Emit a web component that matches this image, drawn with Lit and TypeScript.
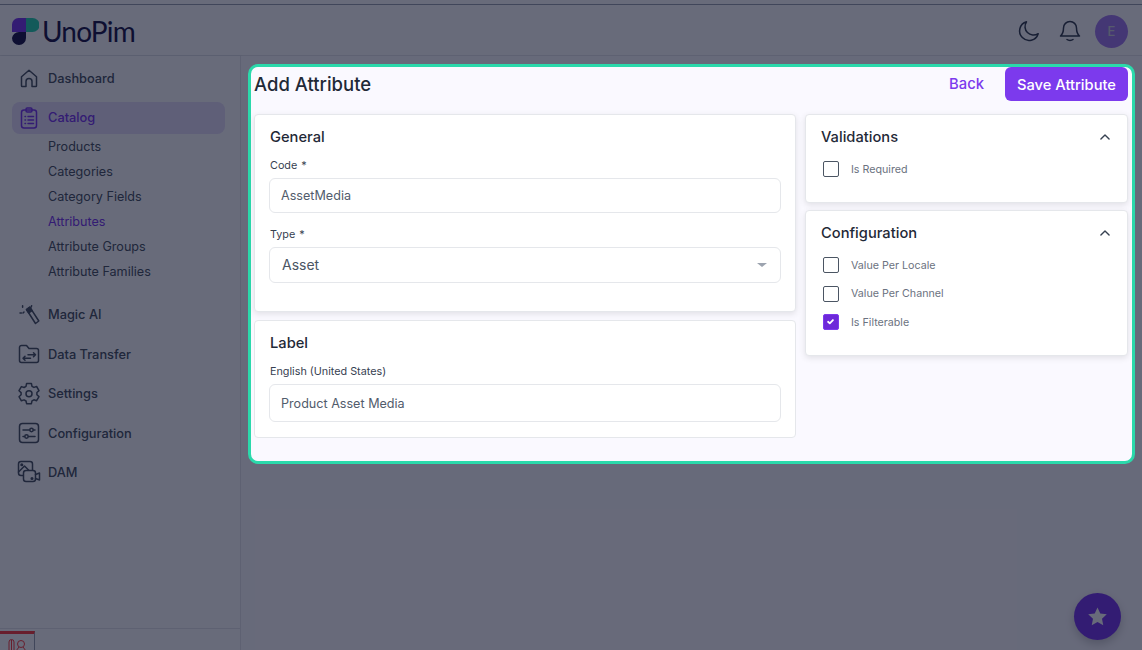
import { html, css, svg, LitElement } from "lit";
import { customElement } from "lit/decorators.js";

const icons: Record<string, unknown> = {
  home: svg`<path d="M4.500 10.700 12 4.300l7.500 6.400v9.100a.8.8 0 0 1-.8.8H15v-5a3 3 0 0 0-6 0v5H5.300a.8.8 0 0 1-.8-.8z"/>`,
  clipboard: svg`<rect x="4.500" y="4" width="15" height="18" rx="2.500"/><rect x="9" y="2" width="6" height="4" rx="1.200"/><path d="M8 10.500h.5M11 10.500h5.500M8 14h.5M11 14h5.500M8 17.500h.5M11 17.500h5.500"/>`,
  wand: svg`<path d="M9.500 7.500 12.800 5.200l9 13.800-3.300 2.500z"/><path d="M9.500 7.500 12.800 5.200 15 8.600l-3.300 2.300z" fill="currentColor"/><path d="M5.600 3.800v1.400M3 11h1.400M14.600 3.800l-.4 1.200M7 10l-1 1"/>`,
  transfer: svg`<path d="M2.500 5.500a2 2 0 0 1 2-2h5l2.500 3h7.500a2 2 0 0 1 2 2v10a2 2 0 0 1-2 2h-15a2 2 0 0 1-2-2z"/><path d="M11 12.800h7.500M16.500 10.800l2 2-2 2M13.500 16.300H6M8 14.300l-2 2 2 2"/>`,
  cog: svg`<path d="M9.600 2.500h4.800l.6 2.800 1.900 1.100 2.700-.9 2.400 4.100-2.100 1.900v2.200l2.100 1.900-2.400 4.100-2.700-.9-1.900 1.100-.6 2.800H9.600L9 20l-1.900-1.100-2.700.9L2 15.700l2.100-1.900v-2.200L2 9.700l2.400-4.100 2.700.9L9 5.300z" stroke-linejoin="round"/><circle cx="12" cy="12.700" r="3"/>`,
  sliders: svg`<rect x="2.500" y="2.500" width="19" height="19" rx="3"/><path d="M6 9h6.500M16.500 9H18M6 15.500h1.500M11.500 15.500H18"/><circle cx="14.500" cy="9" r="1.700"/><circle cx="9.500" cy="15.500" r="1.700"/>`,
  dam: svg`<rect x="1.500" y="1.500" width="14" height="14" rx="2.500"/><circle cx="4.800" cy="4.800" r=".8"/><path d="m1.500 12 6-6 5 5"/><rect x="6.500" y="10.500" width="12" height="11" rx="2.500" fill="var(--nav-fill)"/><path d="m18.500 14.500 4-1.500v7l-4-1.500"/><circle cx="15" cy="18.500" r=".8"/>`,
};

const mainNav = [
  { icon: "wand", label: "Magic AI" },
  { icon: "transfer", label: "Data Transfer" },
  { icon: "cog", label: "Settings" },
  { icon: "sliders", label: "Configuration" },
  { icon: "dam", label: "DAM" },
];

const catalogLinks = ["Products", "Categories", "Category Fields", "Attributes", "Attribute Groups", "Attribute Families"];

const chevron = html`<svg class="chevron" viewBox="0 0 24 24" fill="none" stroke="currentColor" stroke-width="2.400" stroke-linecap="round" stroke-linejoin="round"><path d="m5 15.500 7-7 7 7"/></svg>`;

@customElement("app-root")
export class AppRoot extends LitElement {
  private navIcon(name: string) {
    return html`<svg class="nav-icon" viewBox="0 0 24 24" fill="none" stroke="currentColor" stroke-width="1.500" stroke-linecap="round" stroke-linejoin="round">${icons[name]}</svg>`;
  }

  private check(label: string, checked = false) {
    return html`
      <div class="check-row">
        <span class="box ${checked ? "on" : ""}">
          ${checked ? html`<svg viewBox="0 0 16 16" fill="none" stroke="#fff" stroke-width="2.200" stroke-linecap="round" stroke-linejoin="round"><path d="m5 8.300 2.100 2L11 6.200"/></svg>` : null}
        </span>
        <span class="check-label">${label}</span>
      </div>
    `;
  }

  override render() {
    return html`
      <div class="page">
        <header class="topbar">
          <div class="brand">
            <svg class="logo" viewBox="0 0 27 27">
              <path d="M14 0H6.500A6.500 6.500 0 0 0 0 6.500V14h14z" fill="#7c3aed"/>
              <path d="M14 0h6.500a6.500 6.500 0 0 1 0 14H14z" fill="#2bd4b0"/>
              <path d="M0 20a7 7 0 0 0 14 0v-6H7a7 7 0 0 0-7 6z" fill="#1e1b4b"/>
            </svg>
            <span class="brand-name">UnoPim</span>
          </div>
          <div class="top-actions">
            <svg class="top-icon" viewBox="0 0 24 24" fill="none" stroke="currentColor" stroke-width="1.500" stroke-linecap="round" stroke-linejoin="round"><path d="M9.500 2.800a9.500 9.500 0 1 0 11.700 11.900A8.500 8.500 0 0 1 9.500 2.800z"/></svg>
            <svg class="top-icon" viewBox="0 0 24 24" fill="none" stroke="currentColor" stroke-width="1.500" stroke-linecap="round" stroke-linejoin="round"><path d="M12 2.500a6.500 6.500 0 0 0-6.500 6.500c0 4.500-1 6.300-3 8h19c-2-1.700-3-3.500-3-8A6.500 6.500 0 0 0 12 2.500z"/><path d="M9 20.500c1.500 1.300 4.500 1.300 6 0"/></svg>
            <span class="avatar">E</span>
          </div>
        </header>

        <div class="body">
          <aside class="sidebar">
            <nav>
              <a class="nav-item">${this.navIcon("home")}<span>Dashboard</span></a>
              <a class="nav-item active">${this.navIcon("clipboard")}<span>Catalog</span></a>
              <div class="sub-nav">
                ${catalogLinks.map((l) => html`<a class="sub-item ${l === "Attributes" ? "current" : ""}">${l}</a>`)}
              </div>
              <div class="rest">
                ${mainNav.map((n) => html`<a class="nav-item">${this.navIcon(n.icon)}<span>${n.label}</span></a>`)}
              </div>
            </nav>
            <div class="side-foot"></div>
          </aside>

          <main class="main">
            <section class="focus">
              <div class="title-row">
                <h1>Add Attribute</h1>
                <div class="title-actions">
                  <a class="back">Back</a>
                  <button class="save">Save Attribute</button>
                </div>
              </div>
              <div class="columns">
                <div class="col left">
                  <div class="card general">
                    <h2>General</h2>
                    <label>Code *</label>
                    <div class="input code">AssetMedia</div>
                    <label class="type-label">Type *</label>
                    <div class="input select"><span>Asset</span><i class="caret"></i></div>
                  </div>
                  <div class="card label-card">
                    <h2>Label</h2>
                    <label>English (United States)</label>
                    <div class="input tall">Product Asset Media</div>
                  </div>
                </div>
                <div class="col right">
                  <div class="card validations">
                    <div class="card-head"><h2>Validations</h2>${chevron}</div>
                    ${this.check("Is Required")}
                  </div>
                  <div class="card config">
                    <div class="card-head"><h2>Configuration</h2>${chevron}</div>
                    ${this.check("Value Per Locale")}
                    ${this.check("Value Per Channel")}
                    ${this.check("Is Filterable", true)}
                  </div>
                </div>
              </div>
            </section>
          </main>
        </div>

        <div class="overlay"></div>
        <div class="tour-tab">
          <svg viewBox="0 0 20 12" fill="none" stroke="#ff4040" stroke-width="1"><path d="M1 12V3a2.500 2.500 0 0 1 5 0v9M3.500 1v11"/><circle cx="13" cy="5" r="3.500"/><path d="m8 12 3-4M18 12l-3-4"/></svg>
        </div>
        <button class="fab">
          <svg viewBox="0 0 24 24" fill="#fff"><path d="m12 2.500 2.900 6.300 6.800.8-5 4.700 1.300 6.800-6-3.400-6 3.400 1.300-6.800-5-4.700 6.800-.8z"/></svg>
        </button>
      </div>
    `;
  }

  static styles = css`
    :host {
      display: block;
      font-family: Inter, "Liberation Sans", sans-serif;
      color: #1f2937;
      --nav-fill: #fff;
    }
    * { box-sizing: border-box; }

    .page {
      position: relative;
      width: 1142px;
      height: 650px;
      overflow: hidden;
      background: #fff;
      padding-top: 4px;
    }
    .overlay {
      position: absolute;
      inset: 0;
      background: rgba(4, 9, 34, 0.6);
      z-index: 10;
    }

    .topbar {
      height: 52px;
      border-top: 1px solid #9ca3af;
      border-bottom: 1px solid #e5e7eb;
      display: flex;
      align-items: center;
      justify-content: space-between;
      padding: 0 14px 0 12px;
    }
    .brand { display: flex; align-items: center; gap: 3px; margin-top: 2px; }
    .logo { width: 27px; height: 27px; }
    .brand-name {
      font-family: Lato, sans-serif;
      font-size: 28px;
      font-weight: 400;
      letter-spacing: -0.8px;
      color: #1e1b4b;
    }
    .top-actions { display: flex; align-items: center; gap: 17px; margin-top: 2px; }
    .top-icon { width: 24px; height: 24px; color: #374151; }
    .avatar {
      width: 33px;
      height: 33px;
      margin-left: -4px;
      border-radius: 50%;
      background: #a67ef0;
      color: #d1d5db;
      font-size: 13px;
      font-weight: 500;
      display: flex;
      align-items: center;
      justify-content: center;
    }

    .body { display: flex; height: 594px; }
    .sidebar {
      width: 241px;
      flex: none;
      display: flex;
      flex-direction: column;
      justify-content: space-between;
      background: #fff;
      border-right: 1px solid #e5e7eb;
      box-shadow: 1px 0 2px rgba(0, 0, 0, 0.08);
      padding: 6px 0 0 12px;
    }
    nav { width: 213px; }
    .nav-item {
      display: flex;
      align-items: center;
      gap: 7px;
      height: 32px;
      padding-left: 5px;
      font-size: 12.800px;
      font-weight: 500;
      color: #4b5563;
      border-radius: 8px;
      margin-bottom: 7px;
    }
    .nav-item:nth-child(odd) { margin-bottom: 8px; }
    .nav-item.active { background: #e8e0fb; color: #7c3aed; margin: 8px 0 0; padding-bottom: 1px; }
    .nav-icon { width: 24px; height: 24px; flex: none; }
    .sub-nav { display: flex; flex-direction: column; padding: 0 0 0 36px; }
    .sub-item { height: 25px; line-height: 25px; font-size: 12.600px; color: #4b5563; }
    .sub-item.current { color: #7c3aed; }
    .rest { margin-top: 14px; }
    .side-foot { height: 22px; border-top: 1px solid #e5e7eb; margin-left: -12px; }

    .main { flex: 1; background: #fdfcff; padding: 8px 7px 0 7px; }
    .focus {
      position: relative;
      z-index: 20;
      height: 400px;
      background: #faf9ff;
      border: 3px solid #2bd9ab;
      border-radius: 10px;
      padding: 0 4px 0 3px;
    }
    .title-row {
      display: flex;
      align-items: center;
      justify-content: space-between;
      height: 34px;
      margin-bottom: 13px;
    }
    h1 { margin: 0; font-size: 18.500px; font-weight: 500; color: #1f2937; }
    .title-actions { display: flex; align-items: center; gap: 21px; }
    .back { font-size: 14.800px; font-weight: 500; color: #7c3aed; }
    .save {
      width: 123px;
      height: 34px;
      border: none;
      border-radius: 6px;
      background: #7c3aed;
      color: #fff;
      font: 500 14.700px Inter, sans-serif;
      padding: 1px 0 0;
    }

    .columns { display: flex; gap: 9px; align-items: flex-start; }
    .col { display: flex; flex-direction: column; gap: 8px; }
    .col.left { width: 542px; }
    .col.right { width: 323px; gap: 7px; }
    .card {
      background: #fff;
      border: 1px solid #e5e7eb;
      border-radius: 4px;
      box-shadow: 0 2px 6px rgba(0, 0, 0, 0.1);
      padding: 13px 15px 0;
    }
    .general { height: 198px; }
    .label-card { height: 118px; box-shadow: none; }
    .validations { height: 89px; }
    .config { height: 146px; }
    h2 { margin: 0; font-size: 14.700px; line-height: 18px; font-weight: 500; color: #1f2937; }
    label { display: block; font-size: 10.800px; line-height: 14px; font-weight: 400; word-spacing: 1px; color: #374151; }
    .general label:first-of-type { margin-top: 13px; margin-bottom: 5px; }
    .label-card label { margin-top: 13px; margin-bottom: 5px; word-spacing: 0; }
    .type-label { margin-top: 15px; margin-bottom: 5px; }
    .input {
      display: flex;
      align-items: center;
      justify-content: space-between;
      height: 35px;
      margin: 0 -1px;
      padding: 0 11px;
      border: 1px solid #e5e7eb;
      border-radius: 6px;
      background: #fff;
      font-size: 12.600px;
      color: #525c6c;
    }
    .select { height: 36px; padding: 0 12px 1px; font-size: 14px; color: #4b5563; }
    .tall { height: 38px; }
    .caret {
      width: 0;
      height: 0;
      border-left: 5px solid transparent;
      border-right: 5px solid transparent;
      border-top: 4px solid #9ca3af;
      margin-right: 1px;
    }

    .card-head { display: flex; align-items: center; justify-content: space-between; margin-bottom: 9px; }
    .chevron { width: 14px; height: 14px; color: #374151; }
    .check-row { display: flex; align-items: center; gap: 12px; height: 28.500px; padding-left: 2px; }
    .box {
      width: 16px;
      height: 16px;
      border: 1.500px solid #4b5563;
      border-radius: 2px;
      background: #fff;
      flex: none;
    }
    .box.on { background: #6d28d9; border-color: #7c3aed; }
    .box svg { display: block; width: 13px; height: 13px; }
    .check-label { font-size: 10.700px; font-weight: 400; color: #6b7280; }

    .tour-tab {
      position: absolute;
      left: 0;
      top: 631px;
      width: 35px;
      height: 19px;
      border-top: 3px solid #ff4040;
      border-right: 1px solid #9ca3af;
      background: #fff;
      z-index: 5;
      padding: 5px 0 0 8px;
    }
    .tour-tab svg { display: block; width: 20px; height: 12px; }
    .fab {
      position: absolute;
      left: 1074px;
      top: 593px;
      width: 47px;
      height: 47px;
      border: none;
      border-radius: 50%;
      background: #7c3aed;
      box-shadow: 0 4px 10px rgba(0, 0, 0, 0.2);
      padding: 0;
      z-index: 5;
      display: flex;
      align-items: center;
      justify-content: center;
    }
    .fab svg { width: 23px; height: 23px; }
  `;
}
